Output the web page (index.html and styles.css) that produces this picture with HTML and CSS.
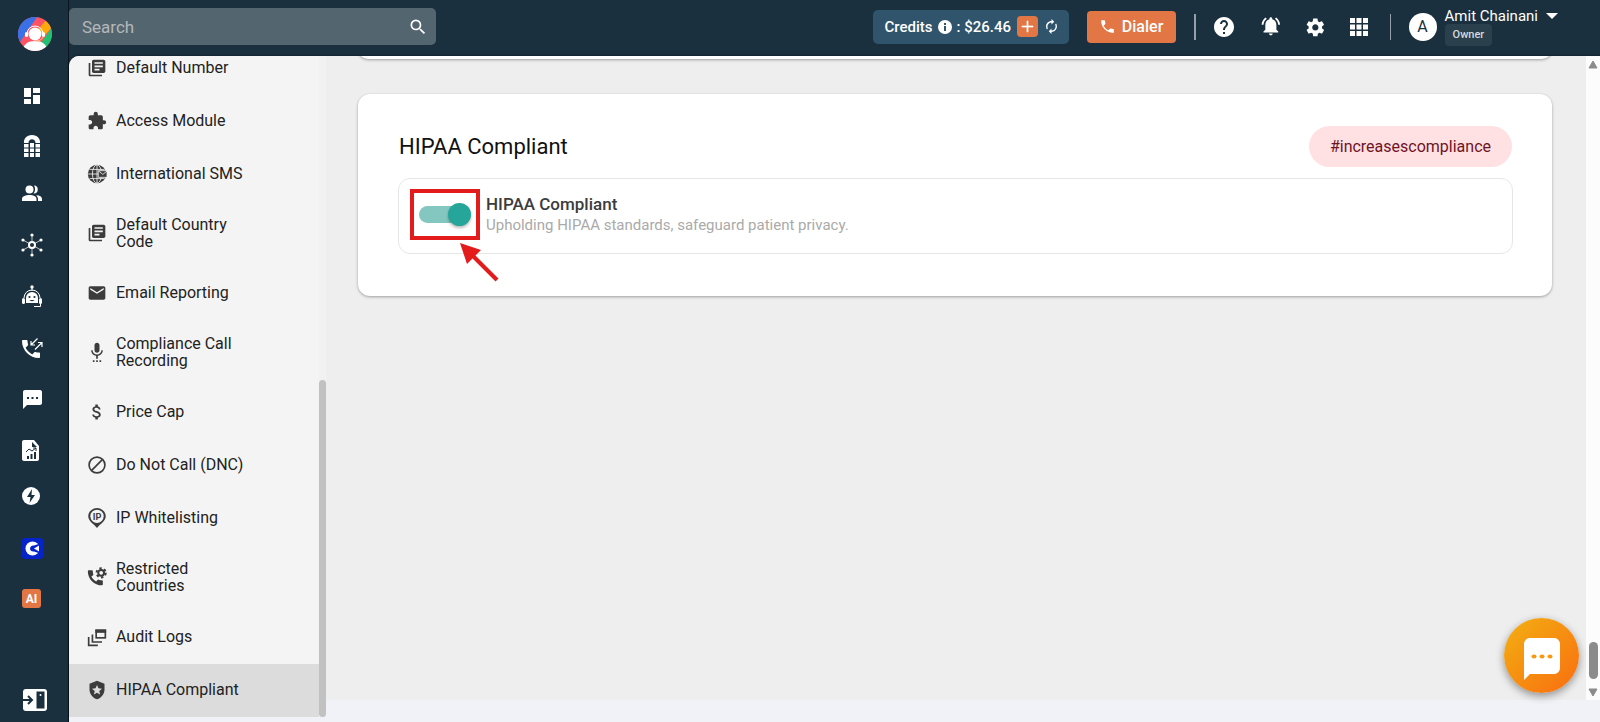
FILE: index.html
```html
<!DOCTYPE html>
<html lang="en">
<head>
  <meta charset="utf-8">
  <title>HIPAA Compliant - Settings</title>
  <link rel="stylesheet" href="styles.css">
</head>
<body>
  <aside class="rail">
    <a class="logo" href="#" aria-label="Home">
      <svg width="34" height="34" viewBox="0 0 34 34">
        <clipPath id="logoClip"><circle cx="17" cy="17" r="17"/></clipPath>
        <g clip-path="url(#logoClip)">
          <rect width="34" height="34" fill="#ff5263"/>
          <path d="M0 0h19L2 25H0z" fill="#3b71e8"/>
          <path d="M28 3l-9 11 8 4 8-9z" fill="#ffa90a"/>
          <path d="M34 10L23 26l8 7h4z" fill="#22c070"/>
          <path d="M5 34c0-7 5-10 12-10s12 3 12 10z" fill="#fff"/>
          <path d="M9 17a8 8 0 0 1 16 0" fill="none" stroke="#fff"/>
          <rect x="7" y="15" width="3" height="5" rx="1.500" fill="#fff"/>
          <rect x="24" y="15" width="3" height="5" rx="1.500" fill="#fff"/>
          <circle cx="17" cy="17" r="6.500" fill="#fff"/>
          <path d="M25 20c-1 3-4 4-8 4" fill="none" stroke="#ffc879"/>
        </g>
      </svg>
    </a>

    <nav class="rail-nav" aria-label="Main">
      <a href="#" aria-label="Dashboard">
        <svg viewBox="0 2 24 24"><path d="M4 4h7v9H4zM4 15h7v5H4zM13 4h7v5h-7zM13 11h7v9h-7z"/></svg>
      </a>
      <a href="#" aria-label="Numbers">
        <svg viewBox="0 2 24 24"><path d="M4 9c-.5-4 2.500-8 8-8s8.500 4 8 8h-4.500c0-5-7-5-7 0z"/><path d="M4 10h4.500v3.500H4zM10 9h4v4.500h-4zM15.500 10H20v3.500h-4.500zM4 14.500h4.500v3.500H4zM10 14.500h4v3.500h-4zM15.500 14.500H20v3.500h-4.500zM4 19h4.500v4H4zM10 19h4v4h-4zM15.500 19H20v4h-4.500z"/></svg>
      </a>
      <a href="#" aria-label="Contacts">
        <svg viewBox="0 5 24 24"><circle cx="9.500" cy="8.500" r="4"/><path d="M2 20v-2c0-3 4-4 7.500-4s7 1 7 4v2zM18 20v-2c0-1.500-.8-2.800-2-3.800 4 .2 6 1.300 6 3.800v2z"/><path d="M14 4.500a4 4 0 1 1-.5 8c2-2 2-6 .5-8z"/></svg>
      </a>
      <a href="#" aria-label="Integrations">
        <svg viewBox="0 3 24 24"><g stroke="#fff" stroke-width=".7"><path d="M12 2v20M3 7l18 10M3 17L21 7"/></g><circle cx="12" cy="12" r="4"/><circle cx="12" cy="12" r="2" class="hole"/><circle cx="12" cy="2" r="1.600"/><circle cx="12" cy="22" r="1.600"/><circle cx="3" cy="7" r="1.600"/><circle cx="21" cy="7" r="1.600"/><circle cx="3" cy="17" r="1.600"/><circle cx="21" cy="17" r="1.600"/></svg>
      </a>
      <a href="#" aria-label="Chatbot">
        <svg viewBox="0 1 24 24"><circle cx="12" cy="2" r="1.700"/><path d="M11.500 3h1v3h-1z"/><path d="M4 13a8 8 0 0 1 16 0" fill="none" stroke="#fff" stroke-width="1"/><path d="M6 18v-5a6 6 0 0 1 12 0v5z"/><rect x="2" y="13" width="3" height="6" rx="1.500"/><rect x="19" y="13" width="3" height="6" rx="1.500"/><path d="M20.500 19v2.500H14" fill="none" stroke="#fff" stroke-width="1"/><g class="hole"><circle cx="9.500" cy="12" r="1.100"/><circle cx="14.500" cy="12" r="1.100"/><path d="M9.500 15h5c-1 1.500-4 1.500-5 0z"/></g></svg>
      </a>
      <a href="#" aria-label="Calls">
        <svg viewBox="0 -1 24 24"><path d="M5.600 10.800c1.400 2.800 3.800 5.100 6.600 6.600l2.200-2.200c.3-.3.700-.4 1-.2 1.100.4 2.300.6 3.600.6.600 0 1 .4 1 1V20c0 .6-.4 1-1 1C9.600 21 2 13.400 2 4c0-.6.400-1 1-1h3.500c.6 0 1 .4 1 1 0 1.200.2 2.400.6 3.600.1.300 0 .7-.3 1z"/><path d="M17.500 1.500L11 8M11 4v4h4M15 12.500l7-7M18 5.500h4v4.500" fill="none" stroke="#fff" stroke-width="1.200"/></svg>
      </a>
      <a href="#" aria-label="Messages">
        <svg viewBox="0 -1 24 24"><path d="M5 3h15c1.100 0 2 .9 2 2v11c0 1.100-.9 2-2 2H7l-4 4V5c0-1.100.9-2 2-2z"/><path class="hole" d="M7 10h2v2H7zM11.500 10h2v2h-2zM16 10h2v2h-2z"/></svg>
      </a>
      <a href="#" aria-label="Reports">
        <svg viewBox="0 -3 24 24"><path d="M4 1h10l5 6v13c0 1.100-.9 2-2 2H4c-1.100 0-2-.9-2-2V3c0-1.100.9-2 2-2z"/><path class="hole" d="M12 3v5h5zM7 17h2v3H7zM10.500 15h2v5h-2zM14 13h2v7h-2z"/><path d="M6 13l3-3 3 2 4-3M13 9h3v3" fill="none" stroke="#1a303e"/></svg>
      </a>
      <a href="#" aria-label="Automation">
        <svg viewBox="0 2 24 24"><circle cx="11" cy="12" r="9"/><path class="hole" d="M12 5l-5 8h3.500l-1 6 5.500-8h-3.500z"/></svg>
      </a>
      <a href="#" aria-label="Campaigns">
        <svg viewBox="0 -1 24 24"><rect x="2" y="1" width="21" height="21" rx="3" fill="#0524c9"/><circle cx="12.500" cy="11.500" r="7"/><path d="M10 11.500c0-2 2-3.500 4-3l6-2v10l-6-2c-2 .5-4-1-4-3z" fill="#0524c9"/><path d="M14 11.500L19 8.500v6z"/></svg>
      </a>
      <a href="#" aria-label="AI">
        <svg viewBox="0 -1 24 24"><rect x="2" y="2" width="19" height="19" rx="3" fill="#e27645"/><text x="11.500" y="16" text-anchor="middle" class="icon-text">AI</text></svg>
      </a>
    </nav>

    <button class="rail-toggle" type="button" aria-label="Expand menu">
      <svg width="24" height="22" viewBox="0 0 24 22"><rect width="24" height="22" rx="3" fill="#fff"/><rect x="13.500" y="2.500" width="8" height="17" fill="#1a303e"/><circle cx="17.500" cy="6" r="1" fill="#fff"/><path d="M0 11h8M5 7l4 4-4 4" fill="none" stroke="#1a303e" stroke-width="2"/></svg>
    </button>
  </aside>

  <div class="page">
    <header class="topbar">
      <div class="search">
        <input type="search" placeholder="Search" aria-label="Search">
        <button type="button" aria-label="Search">
          <svg width="20" height="20" viewBox="0 0 24 24"><path d="M15.500 14h-.79l-.28-.27A6.471 6.471 0 0 0 16 9.500 6.500 6.500 0 1 0 9.500 16c1.610 0 3.090-.59 4.230-1.570l.27.28v.79l5 4.990L20.490 19l-4.990-5zm-6 0C7.010 14 5 11.990 5 9.500S7.010 5 9.500 5 14 7.010 14 9.500 11.990 14 9.500 14z"/></svg>
        </button>
      </div>

      <div class="credits">
        <span>Credits</span>
        <svg width="14" height="14" viewBox="0 0 14 14"><circle cx="7" cy="7" r="7"/><path d="M6 3h2v2H6zM6 6h2v5H6z" fill="#2f546c"/></svg>
        <span>: $26.46</span>
        <button class="add" type="button" aria-label="Add credits">
          <svg width="21" height="21" viewBox="0 0 21 21"><path d="M10 5h1v5h5v1h-5v5h-1v-5H5v-1h5z" stroke="#fff" stroke-width=".7"/></svg>
        </button>
        <button type="button" aria-label="Refresh credits">
          <svg width="15" height="15" viewBox="2 1 20 22"><path d="M12 6v3l4-4-4-4v3c-4.420 0-8 3.580-8 8 0 1.570.46 3.030 1.240 4.260L6.700 14.800c-.45-.83-.7-1.790-.7-2.800 0-3.310 2.690-6 6-6zm6.760 1.740L17.300 9.200c.44.84.7 1.790.7 2.800 0 3.310-2.690 6-6 6v-3l-4 4 4 4v-3c4.420 0 8-3.580 8-8 0-1.570-.46-3.030-1.240-4.260z"/></svg>
        </button>
      </div>

      <button class="dialer" type="button">
        <svg width="17" height="17" viewBox="0 0 24 24"><path d="M6.620 10.790c1.440 2.830 3.760 5.140 6.590 6.590l2.200-2.200c.27-.27.67-.36 1.020-.24 1.120.37 2.330.57 3.570.57.55 0 1 .45 1 1V20c0 .55-.45 1-1 1-9.390 0-17-7.610-17-17 0-.55.45-1 1-1h3.500c.55 0 1 .45 1 1 0 1.250.2 2.450.57 3.570.11.35.03.74-.25 1.020l-2.200 2.200z"/></svg>
        Dialer
      </button>

      <div class="tools">
        <button type="button" aria-label="Help">
          <svg viewBox="0 0 24 24"><path d="M12 2C6.480 2 2 6.480 2 12s4.480 10 10 10 10-4.480 10-10S17.520 2 12 2zm1 17h-2v-2h2v2zm2.070-7.750l-.9.920C13.450 12.900 13 13.500 13 15h-2v-.5c0-1.100.45-2.100 1.170-2.830l1.240-1.260c.37-.36.59-.86.59-1.410 0-1.100-.9-2-2-2s-2 .9-2 2H8c0-2.210 1.790-4 4-4s4 1.790 4 4c0 .88-.36 1.680-.93 2.250z"/></svg>
        </button>
        <button type="button" aria-label="Notifications">
          <svg viewBox="-3 0 26 26"><path d="M7.580 4.080L6.150 2.650C3.750 4.480 2.170 7.300 2.030 10.500h2c.15-2.650 1.510-4.970 3.550-6.420zm12.390 6.420h2c-.15-3.200-1.730-6.020-4.120-7.850l-1.420 1.430c2.020 1.450 3.390 3.770 3.540 6.420zM18 11c0-3.070-1.640-5.640-4.500-6.320V4c0-.83-.67-1.500-1.500-1.500s-1.500.67-1.500 1.500v.68C7.630 5.360 6 7.920 6 11v5l-2 2v1h16v-1l-2-2v-5zm-6 11c.14 0 .27-.01.4-.04.65-.14 1.180-.58 1.440-1.180.1-.24.15-.5.15-.78h-4c.01 1.100.9 2 2.010 2z"/></svg>
        </button>
        <button type="button" aria-label="Settings">
          <svg viewBox="-3 -2 27 27"><path d="M19.430 12.980c.04-.32.07-.64.07-.98s-.03-.66-.07-.98l2.110-1.650c.19-.15.24-.42.12-.64l-2-3.460c-.12-.22-.39-.3-.61-.22l-2.490 1c-.52-.4-1.080-.73-1.690-.98l-.38-2.650C14.460 2.180 14.250 2 14 2h-4c-.25 0-.46.18-.49.42l-.38 2.650c-.61.25-1.170.59-1.690.98l-2.490-1c-.23-.09-.49 0-.61.22l-2 3.460c-.13.22-.07.49.12.64l2.110 1.650c-.04.32-.07.65-.07.98s.03.66.07.98l-2.110 1.650c-.19.15-.24.42-.12.64l2 3.460c.12.22.39.3.61.22l2.490-1c.52.4 1.080.73 1.690.98l.38 2.650c.03.24.24.42.49.42h4c.25 0 .46-.18.49-.42l.38-2.650c.61-.25 1.170-.59 1.690-.98l2.490 1c.23.09.49 0 .61-.22l2-3.460c.12-.22.07-.49-.12-.64l-2.110-1.650zM12 15.500c-1.930 0-3.500-1.570-3.500-3.500s1.570-3.500 3.500-3.500 3.500 1.570 3.500 3.500-1.570 3.500-3.500 3.500z"/></svg>
        </button>
        <button type="button" aria-label="Apps">
          <svg viewBox="0 0 24 24"><path d="M3 3h5v5H3zM9.500 3h5v5h-5zM16 3h5v5h-5zM3 9.500h5v5H3zM9.500 9.500h5v5h-5zM16 9.500h5v5h-5zM3 16h5v5H3zM9.500 16h5v5h-5zM16 16h5v5h-5z"/></svg>
        </button>
      </div>

      <button class="user" type="button">
        <span class="avatar">A</span>
        <span class="user-info">
          <span class="user-name">Amit Chainani
            <svg width="12" height="6" viewBox="0 0 12 6"><path d="M0 0h12L6 6z"/></svg>
          </span>
          <span class="role">Owner</span>
        </span>
      </button>
    </header>

    <div class="body">
      <div class="sidebar">
        <nav class="menu" aria-label="Settings">
          <a href="#">
            <svg viewBox="0 0 24 24"><path d="M4 6H2v14c0 1.100.9 2 2 2h14v-2H4V6zm16-4H8c-1.100 0-2 .9-2 2v12c0 1.100.9 2 2 2h12c1.100 0 2-.9 2-2V4c0-1.100-.9-2-2-2zm-1 9H9V9h10v2zm-4 4H9v-2h6v2zm4-8H9V5h10v2z"/></svg>
            <span>Default Number</span>
          </a>
          <a href="#">
            <svg viewBox="0 0 24 24"><path d="M20.500 11H19V7c0-1.100-.9-2-2-2h-4V3.500C13 2.120 11.880 1 10.500 1S8 2.120 8 3.500V5H4c-1.100 0-1.990.9-1.990 2v3.800H3.500c1.490 0 2.700 1.210 2.700 2.700s-1.210 2.700-2.700 2.700H2V20c0 1.100.9 2 2 2h3.800v-1.500c0-1.490 1.210-2.700 2.700-2.700 1.490 0 2.700 1.210 2.700 2.700V22H17c1.100 0 2-.9 2-2v-4h1.500c1.380 0 2.500-1.120 2.500-2.500S21.880 11 20.500 11z"/></svg>
            <span>Access Module</span>
          </a>
          <a href="#">
            <svg viewBox="0 0 24 24"><circle cx="12" cy="12" r="11"/><path d="M12 1v22M1 12h22M3 6.500h18M3 17.500h18" fill="none" stroke="#f4f4f4"/><ellipse cx="12" cy="12" rx="5.500" ry="11" fill="none" stroke="#f4f4f4"/><path d="M13.500 8H24v8H13.500z" stroke="#f4f4f4"/><path d="M14 8.500l5 4 5-4" fill="none" stroke="#f4f4f4"/></svg>
            <span>International SMS</span>
          </a>
          <a href="#">
            <svg viewBox="0 0 24 24"><path d="M4 6H2v14c0 1.100.9 2 2 2h14v-2H4V6zm16-4H8c-1.100 0-2 .9-2 2v12c0 1.100.9 2 2 2h12c1.100 0 2-.9 2-2V4c0-1.100-.9-2-2-2zm-1 9H9V9h10v2zm-4 4H9v-2h6v2zm4-8H9V5h10v2z"/></svg>
            <span>Default Country Code</span>
          </a>
          <a href="#">
            <svg viewBox="0 0 24 24"><path d="M20 4H4c-1.100 0-1.990.9-1.990 2L2 18c0 1.100.9 2 2 2h16c1.100 0 2-.9 2-2V6c0-1.100-.9-2-2-2zm0 4l-8 5-8-5V6l8 5 8-5v2z"/></svg>
            <span>Email Reporting</span>
          </a>
          <a href="#">
            <svg viewBox="0 0 24 24"><path d="M12 13c1.660 0 2.990-1.340 2.990-3L15 4c0-1.660-1.340-3-3-3S9 2.340 9 4v6c0 1.660 1.340 3 3 3zM7 24h2v-2H7v2zm4 0h2v-2h-2v2zm4 0h2v-2h-2v2zm4-14h-1.700c0 3-2.540 5.100-5.300 5.100S6.700 13 6.700 10H5c0 3.410 2.720 6.230 6 6.720V20h2v-3.280c3.280-.49 6-3.310 6-6.720z"/></svg>
            <span>Compliance Call Recording</span>
          </a>
          <a href="#">
            <svg viewBox="0 0 24 24"><path d="M11.800 10.900c-2.270-.59-3-1.200-3-2.150 0-1.090 1.010-1.850 2.700-1.850 1.780 0 2.440.85 2.500 2.100h2.210c-.07-1.720-1.120-3.300-3.210-3.810V3h-3v2.160c-1.940.42-3.500 1.680-3.500 3.610 0 2.310 1.910 3.460 4.700 4.130 2.500.6 3 1.480 3 2.410 0 .69-.49 1.790-2.700 1.790-2.060 0-2.870-.92-2.980-2.100h-2.200c.12 2.190 1.760 3.420 3.680 3.830V21h3v-2.150c1.950-.37 3.500-1.500 3.500-3.550 0-2.840-2.430-3.810-4.700-4.400z"/></svg>
            <span>Price Cap</span>
          </a>
          <a href="#">
            <svg viewBox="0 0 24 24"><g fill="none" stroke="#3c3c3c" stroke-width="2"><circle cx="12" cy="12" r="9.500"/><path d="M5.300 18.700L18.700 5.300"/></g></svg>
            <span>Do Not Call (DNC)</span>
          </a>
          <a href="#">
            <svg viewBox="0 0 24 24"><path d="M12 0C6.500 0 1.500 4.300 1.500 10c0 6 6.500 9 10.500 14 4-5 10.500-8 10.500-14 0-5.700-5-10-10.500-10z"/><circle cx="12" cy="10" r="8" fill="#f4f4f4"/><text x="12" y="14" text-anchor="middle" class="pin-text">IP</text></svg>
            <span>IP Whitelisting</span>
          </a>
          <a href="#">
            <svg viewBox="0 0 24 24"><path d="M5.200 11.500c1.300 2.500 3.300 4.500 5.800 5.800l1.900-1.900c.3-.3.700-.4 1-.2 1.200.4 2.700.6 4.100.6.600 0 1 .4 1 1V21c0 .6-.4 1-1 1C8.600 22 1 14.400 1 5c0-.6.400-1 1-1h4c.6 0 1 .4 1 1 0 1.500.2 2.700.6 3.900.1.300 0 .7-.3 1z"/><g fill="none" stroke="#3c3c3c"><circle cx="17" cy="7" r="3.500" stroke-width="2.400"/><circle cx="17" cy="7" r="5.500" stroke-width="2.400" stroke-dasharray="2.880 2.880"/></g></svg>
            <span>Restricted Countries</span>
          </a>
          <a href="#">
            <svg viewBox="0 0 24 24"><g fill="none" stroke="#3c3c3c" stroke-width="2"><rect x="11" y="4" width="11" height="9"/><path d="M6.500 9v9H18M2 12v10h11"/></g><path d="M10 3h13v4H10z"/></svg>
            <span>Audit Logs</span>
          </a>
          <a href="#" class="active" aria-current="page">
            <svg viewBox="0 0 24 24"><path d="M12 1L3 4.500V11c0 5.600 3.800 10.700 9 12 5.200-1.300 9-6.400 9-12V4.500z"/><path d="M12 6l1.700 4 4.300.4-3.300 2.800 1 4.300-3.700-2.300-3.700 2.300 1-4.300L6 10.400l4.300-.4z" fill="#dcdcdc"/></svg>
            <span>HIPAA Compliant</span>
          </a>
        </nav>
        <div class="menu-track"><div class="menu-thumb"></div></div>
      </div>

      <div class="content">
        <main class="cards">
          <section class="card card-prev"></section>
          <section class="card">
            <div class="card-head">
              <h1>HIPAA Compliant</h1>
              <span class="tag">#increasescompliance</span>
            </div>
            <div class="option">
              <div class="switch-wrap">
                <input class="switch" id="hipaa" type="checkbox" role="switch" checked>
                <div class="highlight"></div>
                <svg class="arrow" width="42" height="42" viewBox="0 0 42 42"><path d="M38 38L14 14" stroke="#e31b1b" stroke-width="4"/><path d="M1 1l21 7L8 22z" fill="#e31b1b"/></svg>
              </div>
              <label class="option-text" for="hipaa">
                <span class="option-title">HIPAA Compliant</span>
                <span class="option-desc">Upholding HIPAA standards, safeguard patient privacy.</span>
              </label>
            </div>
          </section>
        </main>
        <div class="page-track">
          <svg width="10" height="9" viewBox="0 0 10 9"><path d="M5 1l4 7H1z" stroke="#8b8b8b" stroke-linejoin="round"/></svg>
          <div class="page-thumb"></div>
          <svg width="10" height="9" viewBox="0 0 10 9"><path d="M5 8l4-7H1z" stroke="#8b8b8b" stroke-linejoin="round"/></svg>
        </div>
      </div>
    </div>
  </div>

  <button class="chat" type="button" aria-label="Open chat">
    <svg width="36" height="42" viewBox="0 0 36 42"><path d="M6 0h24c3.300 0 6 2.700 6 6v24c0 3.300-2.700 6-6 6H6l-6 6V6c0-3.300 2.700-6 6-6z" fill="#fff"/><g fill="#f79a12"><ellipse cx="10" cy="18.500" rx="2.500" ry="2"/><ellipse cx="18" cy="18.500" rx="2.500" ry="2"/><ellipse cx="26" cy="18.500" rx="2.500" ry="2"/></g></svg>
  </button>
</body>
</html>
```
FILE: styles.css
```css
* {
  box-sizing: border-box;
}
body {
  margin: 0;
  height: 100vh;
  display: flex;
  overflow: hidden;
  background: #1a303e;
  font-family: Roboto, "Liberation Sans", sans-serif;
  font-size: 16px;
  color: #222;
}
button {
  padding: 0;
  border: none;
  background: none;
  color: inherit;
  font: inherit;
  cursor: pointer;
}
svg {
  display: block;
  flex: none;
}
a {
  color: inherit;
  text-decoration: none;
}

/* left icon rail */
.rail {
  width: 69px;
  flex: none;
  display: flex;
  flex-direction: column;
  padding: 17px 0 11px 18px;
  border-right: 1px solid #0b161d;
}
.rail-nav {
  display: flex;
  flex-direction: column;
  gap: 26px;
  margin: 35px 0 auto 2px;
}
.rail-nav svg {
  width: 24px;
  height: 24px;
  overflow: visible;
  fill: #fff;
}
.rail-nav .hole {
  fill: #1a303e;
}
.icon-text {
  font-size: 12px;
  font-weight: 700;
}
.rail-toggle {
  align-self: flex-start;
  margin-left: 5px;
}

.page {
  flex: 1;
  min-width: 0;
  display: flex;
  flex-direction: column;
}

/* top bar */
.topbar {
  height: 56px;
  flex: none;
  display: flex;
  align-items: center;
  padding: 0 42px 3px 0;
  color: #fff;
}
.topbar svg {
  fill: #fff;
}
.search {
  width: 367px;
  height: 37px;
  display: flex;
  align-items: center;
  margin-right: auto;
  padding: 0 8px 0 13px;
  border-radius: 5px;
  background: #53656f;
}
.search input {
  flex: 1;
  min-width: 0;
  padding: 0;
  border: none;
  outline: none;
  background: none;
  color: #fff;
  font: inherit;
  font-size: 17px;
}
.search input::placeholder {
  color: #b4b8bb;
}
.credits {
  width: 196px;
  height: 34px;
  display: flex;
  align-items: center;
  gap: 5px;
  padding-left: 12px;
  border-radius: 5px;
  background: #2f546c;
  font-size: 15px;
  font-weight: 500;
}
.credits .add {
  margin: 0 1px;
  border-radius: 4px;
  background: #e27645;
}
.dialer {
  width: 89px;
  height: 32px;
  display: flex;
  align-items: center;
  justify-content: center;
  gap: 6px;
  margin: 0 18px;
  border-radius: 4px;
  background: #e27645;
  font-size: 16px;
  font-weight: 500;
}
.tools {
  display: flex;
  align-items: center;
  gap: 21px;
  padding: 0 19px 0 16px;
  border-left: 2px solid #96a0a7;
  border-right: 1px solid #96a0a7;
}
.tools svg {
  width: 24px;
  height: 26px;
}
.user {
  display: flex;
  align-items: center;
  gap: 8px;
  margin-left: 18px;
}
.avatar {
  width: 28px;
  height: 28px;
  border-radius: 50%;
  background: #fff;
  color: #1a303e;
  line-height: 28px;
}
.user-info {
  display: flex;
  flex-direction: column;
  align-items: flex-start;
}
.user-name {
  display: flex;
  align-items: center;
  gap: 8px;
  font-size: 15px;
  line-height: 16px;
}
.role {
  padding: 0 8px;
  border-radius: 4px;
  background: #2a404c;
  color: #d5dade;
  font-size: 11px;
  font-weight: 500;
  line-height: 22px;
}

.body {
  flex: 1;
  min-height: 0;
  display: flex;
  border-top-left-radius: 10px;
  background: #f1f2f7;
  box-shadow: 0 0 3px #0008;
  overflow: hidden;
}

/* settings menu */
.sidebar {
  width: 257px;
  flex: none;
  display: flex;
  margin-bottom: 5px;
  background: #f4f4f4;
}
.menu {
  flex: 1;
  display: flex;
  flex-direction: column;
  justify-content: flex-end;
  overflow: hidden;
}
.menu a {
  flex: none;
  min-height: 53px;
  display: flex;
  align-items: center;
  gap: 9px;
  padding: 15px 70px 17px 18px;
  font-size: 16px;
  line-height: 17px;
}
.menu a:hover,
.menu .active {
  background: #dcdcdc;
}
.menu svg {
  width: 20px;
  height: 20px;
  fill: #3c3c3c;
}
.pin-text {
  font-size: 11px;
  font-weight: 700;
}
.menu-track {
  width: 7px;
  display: flex;
  align-items: flex-end;
  background: #f1f1f1;
}
.menu-thumb {
  width: 7px;
  height: 51%;
  border-radius: 4px;
  background: #c1c1c1;
}

/* content */
.content {
  flex: 1;
  min-width: 0;
  display: flex;
  margin-bottom: 22px;
  background: #eee;
}
.cards {
  flex: 1;
  padding: 0 34px 0 32px;
}
.card {
  margin-bottom: 35px;
  padding: 32px 39px 42px 40px;
  border-radius: 12px;
  background: #fff;
  box-shadow: 0 1px 3px #0005;
}
.card-prev {
  height: 20px;
  margin-top: -17px;
  padding: 0;
}
.card-head {
  display: flex;
  align-items: center;
  justify-content: space-between;
  margin: 0 1px 11px;
}
h1 {
  margin: 0;
  font-size: 22px;
  font-weight: 400;
  color: #111;
}
.tag {
  padding: 0 21px;
  border-radius: 21px;
  background: #ffe0e3;
  color: #6e1423;
  font-size: 16px;
  line-height: 41px;
}
.option {
  display: flex;
  align-items: center;
  padding: 15px 20px 18px;
  border: 1px solid #e6e6e6;
  border-radius: 12px;
}
.switch-wrap {
  position: relative;
  margin-right: 15px;
}
.switch {
  appearance: none;
  display: block;
  position: relative;
  width: 52px;
  height: 17px;
  margin: 0;
  border-radius: 9px;
  background: #ccc;
  cursor: pointer;
}
.switch:checked {
  background: #84c7c0;
}
.switch::after {
  content: "";
  position: absolute;
  top: -3px;
  left: 0;
  width: 23px;
  height: 23px;
  border-radius: 50%;
  background: #fff;
  box-shadow: 0 2px 3px #0004;
}
.switch:checked::after {
  left: auto;
  right: 0;
  background: #26a69a;
}
.highlight {
  position: absolute;
  top: -17px;
  left: -9px;
  width: 70px;
  height: 51px;
  border: 4px solid #e31b1b;
  pointer-events: none;
}
.arrow {
  position: absolute;
  top: 36px;
  left: 40px;
  pointer-events: none;
}
.option-text {
  display: flex;
  flex-direction: column;
}
.option-title {
  font-size: 17px;
  font-weight: 500;
  line-height: 21px;
  color: #3c3c3c;
}
.option-desc {
  font-size: 15px;
  line-height: 20px;
  color: #aaa;
}

.page-track {
  width: 14px;
  display: flex;
  flex-direction: column;
  align-items: center;
  padding: 4px 0 3px;
  background: #fcfcfc;
}
.page-track svg {
  fill: #8b8b8b;
}
.page-thumb {
  width: 9px;
  height: 37px;
  margin: auto 0 9px;
  border-radius: 5px;
  background: #8b8b8b;
}

/* chat bubble */
.chat {
  position: fixed;
  right: 21px;
  bottom: 29px;
  width: 75px;
  height: 75px;
  display: flex;
  align-items: center;
  justify-content: center;
  padding-top: 6px;
  border-radius: 50%;
  background: linear-gradient(135deg, #f3b012, #f96d10);
  box-shadow: 0 3px 8px #0006;
}
```
